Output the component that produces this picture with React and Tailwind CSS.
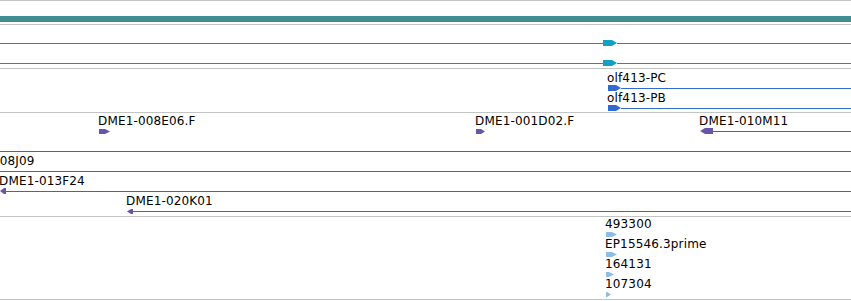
const font = "font-['DejaVu_Sans',sans-serif] text-[12px] leading-none tracking-[0.15px] text-black";

const PURPLE = '#6a54a8';
const BLUE = '#2f6bd0';
const TEAL = '#1b8fb0';
const CYAN = '#14a0c4';
const LIGHT = '#8dbde3';

// right-pointing exon glyph
function Fwd({ w = 14, h = 6, body = 9, color }) {
  return (
    <svg className="shrink-0" width={w} height={h}>
      <polygon points={`0,0 ${body},0 ${w},${h / 2} ${body},${h} 0,${h}`} fill={color} />
    </svg>
  );
}

// left-pointing exon glyph
function Rev({ w = 13, h = 6, head = 5, color }) {
  return (
    <svg className="shrink-0" width={w} height={h}>
      <polygon points={`0,${h / 2} ${head},0 ${w},0 ${w},${h} ${head},${h}`} fill={color} />
    </svg>
  );
}

function Rule({ color, className = 'flex-1' }) {
  return <div className={`h-px ${className}`} style={{ backgroundColor: color }} />;
}

// one feature on the track canvas, placed at its genomic x
function Feature({ x, label, open, align = 'items-center', children }) {
  return (
    <div className={`absolute inset-y-0 flex flex-col ${open ? 'right-0' : ''}`} style={{ left: x }}>
      <span className={`block h-[14px] pt-px -ml-px whitespace-nowrap ${font}`}>{label}</span>
      <div className={`h-[6px] flex ${align}`}>{children}</div>
    </div>
  );
}

function Row({ children }) {
  return <div className="relative h-[20px]">{children}</div>;
}

export default function App() {
  return (
    <div className="w-[851px] h-[301px] bg-white overflow-hidden">
      <div className="flex flex-col border-t border-[#c4c4c4]">
        {/* gene span */}
        <div className="h-[24px] pt-[15px] border-b border-[#c4c4c4]">
          <div className="h-[6px] bg-[#3f8e91]" />
        </div>

        {/* transcripts */}
        <div className="h-[44px] pt-px border-b border-[#c4c4c4]">
          {[0, 1].map((i) => (
            <Row key={i}>
              <Feature x={0} open>
                <Rule color={TEAL} className="w-[603px]" />
                <Fwd color={CYAN} />
                <Rule color={TEAL} />
              </Feature>
            </Row>
          ))}
        </div>

        {/* proteins */}
        <div className="h-[44px] pt-[2px] border-b border-[#c4c4c4]">
          {['olf413-PC', 'olf413-PB'].map((name) => (
            <Row key={name}>
              <Feature x={608} label={name} open>
                <Fwd w={13} body={8} color={BLUE} />
                <Rule color={BLUE} />
              </Feature>
            </Row>
          ))}
        </div>

        {/* clones */}
        <div className="h-[104px] pt-px border-b border-[#c4c4c4]">
          <Row>
            <Feature x={99} label="DME1-008E06.F">
              <Fwd w={11} h={5} body={6} color={PURPLE} />
            </Feature>
            <Feature x={476} label="DME1-001D02.F">
              <Fwd w={9} h={5} body={5} color={PURPLE} />
            </Feature>
            <Feature x={700} label="DME1-010M11" open>
              <Rev color={PURPLE} />
              <Rule color={PURPLE} />
            </Feature>
          </Row>
          <Row>
            <Feature x={0} open>
              <Rule color={PURPLE} />
            </Feature>
          </Row>
          <Row>
            <Feature x={-47} label="DME1-008J09" open>
              <Rule color={PURPLE} />
            </Feature>
          </Row>
          <Row>
            <Feature x={0} label="DME1-013F24" open>
              <Rev w={6} head={4} color={PURPLE} />
              <Rule color={PURPLE} />
            </Feature>
          </Row>
          <Row>
            <Feature x={127} label="DME1-020K01" open>
              <Rev w={6} h={5} head={4} color={PURPLE} />
              <Rule color={PURPLE} />
            </Feature>
          </Row>
        </div>

        {/* ESTs */}
        <div className="h-[83px] border-b border-[#c4c4c4]">
          <Row>
            <Feature x={606} label="493300" align="items-end">
              <Fwd w={11} h={5} body={6} color={LIGHT} />
            </Feature>
          </Row>
          <Row>
            <Feature x={606} label="EP15546.3prime" align="items-end">
              <Fwd w={11} h={5} body={6} color={LIGHT} />
            </Feature>
          </Row>
          <Row>
            <Feature x={606} label="164131" align="items-end">
              <Fwd w={8} h={5} body={3} color={LIGHT} />
            </Feature>
          </Row>
          <Row>
            <Feature x={606} label="107304" align="items-end">
              <Fwd w={5} h={5} body={1} color={LIGHT} />
            </Feature>
          </Row>
        </div>
      </div>
    </div>
  );
}
